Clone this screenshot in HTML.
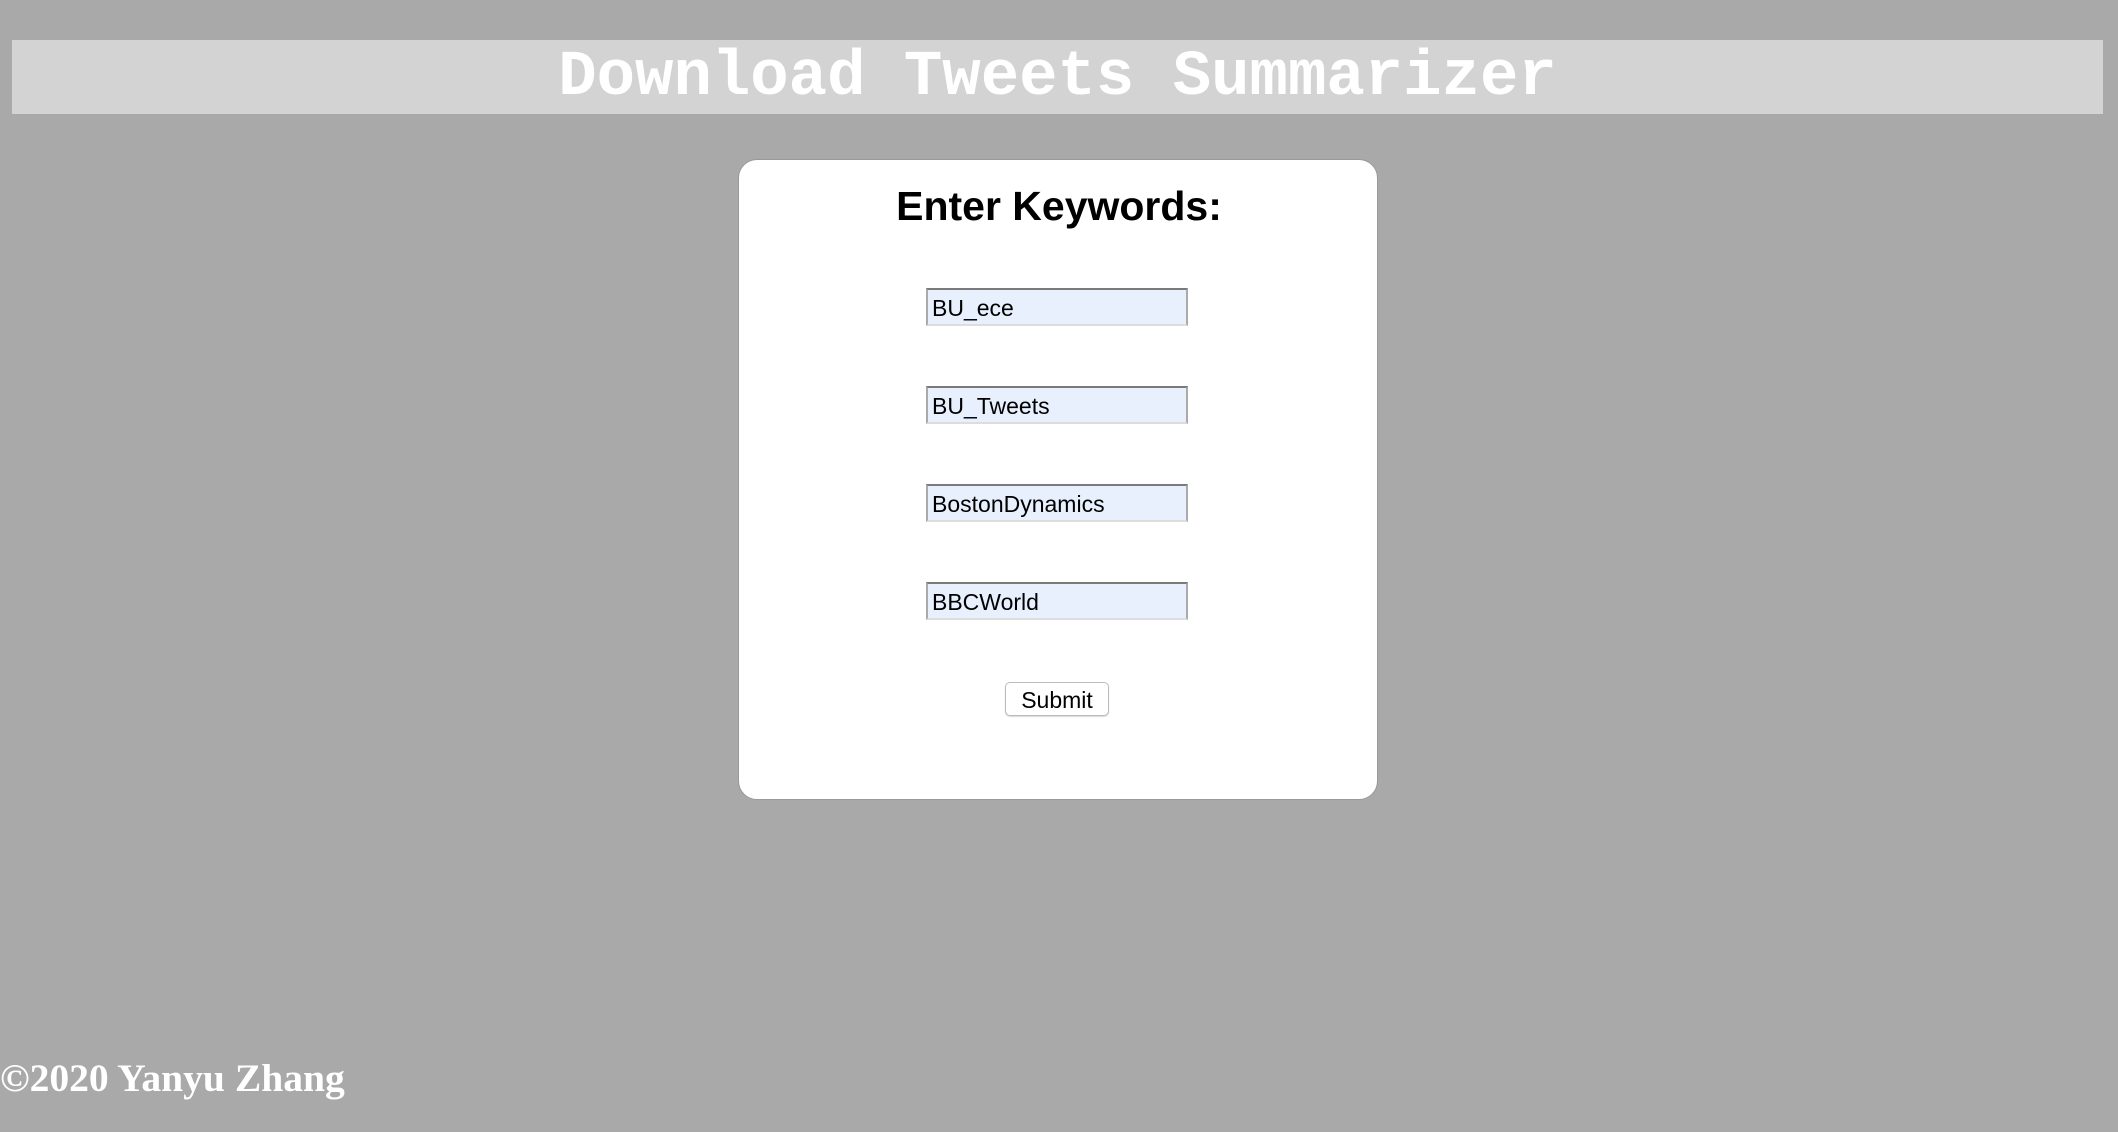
<!DOCTYPE html>
<html><head><meta charset="utf-8"><style>
html,body{margin:0;padding:0;}
body{width:2118px;height:1132px;background:#a9a9a9;position:relative;overflow:hidden;}
.hdr{position:absolute;left:12px;top:40px;width:2091px;height:74px;background:#d3d3d3;}
.hdr div{position:absolute;left:0;right:0;top:1px;text-align:center;font-family:"Liberation Mono",monospace;font-weight:bold;font-size:64px;line-height:74px;color:#fff;padding-left:0px;}
.card{position:absolute;left:738px;top:159px;width:638px;height:639px;background:#fff;border:1px solid #999;border-radius:19px;}
h1{position:absolute;left:0;right:0;top:182px;margin:0;text-align:center;font-family:"Liberation Sans",sans-serif;font-weight:bold;font-size:41px;line-height:48px;letter-spacing:0;color:#000;padding-left:0;}
.in{position:absolute;left:926px;width:254px;height:34px;background:#e8f0fe;border-top:2px solid #7a7a7a;border-left:2px solid #aaa;border-right:2px solid #aaa;border-bottom:2px solid #ddd;font-family:"Liberation Sans",sans-serif;font-size:23px;line-height:37px;color:#000;box-sizing:content-box;padding-left:4px;}
.btn{position:absolute;left:1005px;top:682px;width:102px;height:32px;border:1px solid #bbb;border-radius:5px;background:#fff;font-family:"Liberation Sans",sans-serif;font-size:23px;line-height:34px;text-align:center;color:#000;box-shadow:0 1px 1px rgba(0,0,0,.15);}
.ft{position:absolute;left:0;top:1053px;font-family:"Liberation Serif",serif;font-weight:bold;font-size:39.6px;line-height:50px;color:#fff;}
</style></head><body>
<div class="hdr"><div>Download Tweets Summarizer</div></div>
<div class="card"></div>
<h1>Enter Keywords:</h1>
<div class="in" style="top:288px">BU_ece</div>
<div class="in" style="top:386px">BU_Tweets</div>
<div class="in" style="top:484px">BostonDynamics</div>
<div class="in" style="top:582px">BBCWorld</div>
<div class="btn">Submit</div>
<div class="ft">©2020 Yanyu Zhang</div>
</body></html>
